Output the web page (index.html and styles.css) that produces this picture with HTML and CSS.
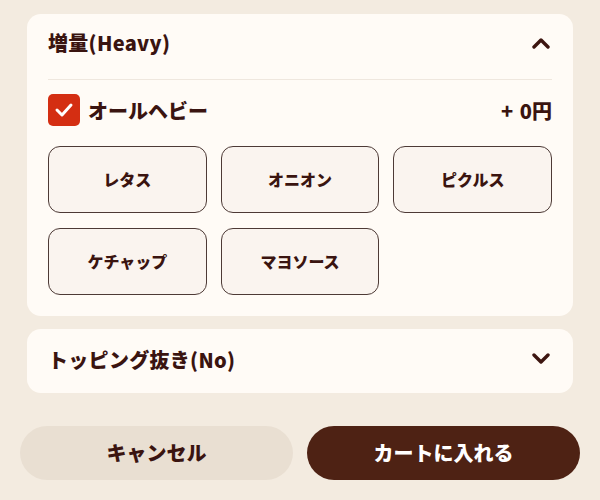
FILE: index.html
```html
<!DOCTYPE html>
<html lang="ja">
<head>
    <meta charset="UTF-8">
    <meta name="viewport" content="width=device-width, initial-scale=1.0">
    <title>オプション選択</title>
    <link rel="stylesheet" href="styles.css">
</head>
<body>

    <div class="sheet">
        <!-- 増量 -->
        <div class="card">
            <div class="card-head">
                <span class="card-title">増量(Heavy)</span>
                <svg class="chev" width="18" height="12" viewBox="0 0 18 12"><path d="M2 10 L9 3 L16 10" fill="none" stroke="#3d1510" stroke-width="3.4" stroke-linecap="round" stroke-linejoin="round"/></svg>
            </div>
            <div class="check-row">
                <span class="checkbox">
                    <svg width="20" height="16" viewBox="0 0 20 16"><path d="M3 8 L8 13 L17 3" fill="none" stroke="#fff" stroke-width="3" stroke-linecap="round" stroke-linejoin="round"/></svg>
                </span>
                <span class="check-label">オールヘビー</span>
                <span class="price">+ 0円</span>
            </div>
            <div class="options">
                <button class="opt">レタス</button>
                <button class="opt">オニオン</button>
                <button class="opt">ピクルス</button>
                <button class="opt">ケチャップ</button>
                <button class="opt">マヨソース</button>
            </div>
        </div>

        <!-- トッピング抜き -->
        <div class="card closed">
            <div class="card-head">
                <span class="card-title">トッピング抜き(No)</span>
                <svg class="chev" width="18" height="12" viewBox="0 0 18 12"><path d="M2 2 L9 9 L16 2" fill="none" stroke="#3d1510" stroke-width="3.4" stroke-linecap="round" stroke-linejoin="round"/></svg>
            </div>
        </div>

        <div class="actions">
            <button class="btn cancel">キャンセル</button>
            <button class="btn add">カートに入れる</button>
        </div>
    </div>

</body>
</html>
```

FILE: styles.css
```css
body {
    margin: 0;
    background: #f3ebe0;
    font-family: "Noto Sans CJK JP", "Noto Sans", sans-serif;
    color: #3a1410;
}
.sheet {
    padding: 14px 20px 0;
}
.card {
    margin: 0 7px;
    background: #fffbf6;
    border-radius: 14px;
    padding: 0 21px 21px;
}
.card.closed {
    margin-top: 13px;
    padding-bottom: 0;
}
.card-head {
    display: flex;
    justify-content: space-between;
    align-items: center;
    height: 66px;
    border-bottom: 1px solid #efe7de;
    box-sizing: border-box;
    padding-bottom: 8px;
}
.closed .card-head {
    height: 64px;
    border-bottom: none;
    padding-bottom: 4px;
}
.card-title {
    font-size: 20px;
    font-weight: 900;
    letter-spacing: 0.3px;
}
.chev {
    margin-right: 2px;
}
.check-row {
    display: flex;
    align-items: center;
    margin-top: 14px;
}
.checkbox {
    width: 32px;
    height: 32px;
    border-radius: 5px;
    background: #d42e12;
    display: flex;
    align-items: center;
    justify-content: center;
}
.check-label {
    margin-left: 8px;
    font-size: 20px;
    font-weight: 900;
    flex: 1;
}
.price {
    font-size: 20px;
    font-weight: 900;
    word-spacing: 2px;
}
.options {
    display: grid;
    grid-template-columns: repeat(3, 1fr);
    gap: 15px 14px;
    margin-top: 20px;
}
.opt {
    height: 67px;
    padding-bottom: 3px;
    background: #faf4ef;
    border: 1px solid #4d3a36;
    border-radius: 12px;
    font-family: inherit;
    font-size: 16px;
    font-weight: 900;
    color: #3a1410;
}
.actions {
    display: flex;
    gap: 14px;
    margin-top: 33px;
}
.btn {
    flex: 1;
    height: 54px;
    padding-bottom: 2px;
    border: none;
    border-radius: 27px;
    font-family: inherit;
    font-size: 20px;
    font-weight: 900;
}
.cancel {
    background: #e9dfd2;
    color: #3a1410;
}
.add {
    background: #4e2214;
    color: #fff;
}
```
